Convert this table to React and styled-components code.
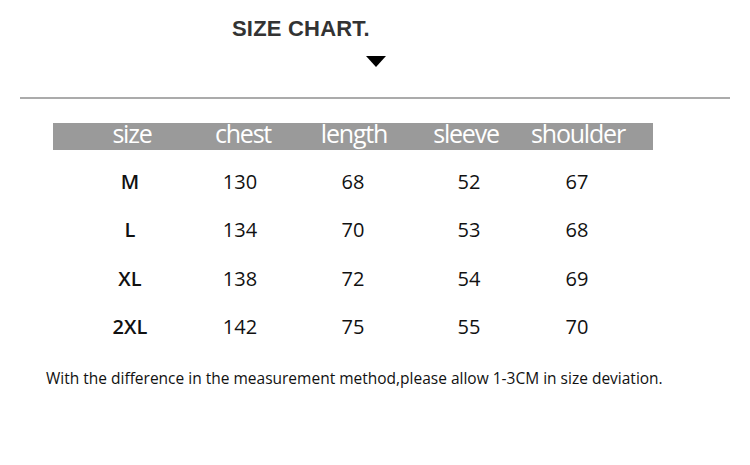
import React from "react";
import styled, { createGlobalStyle } from "styled-components";

const Global = createGlobalStyle`
  html, body { margin: 0; padding: 0; background: #fff; }
  body { width: 750px; height: 465px; overflow: hidden; }
`;

const Page = styled.div`
  width: 750px;
  height: 465px;
  background: #fff;
  display: flex;
  flex-direction: column;
  font-family: "Open Sans", "Noto Sans", sans-serif;
  color: #111;
`;

const Title = styled.h1`
  margin: 0;
  padding: 17px 0 0 232px;
  font-family: "Liberation Sans", Arial, sans-serif;
  font-weight: 700;
  font-size: 22px;
  line-height: 24px;
  color: #333;
  letter-spacing: 0.2px;
`;

const Arrow = styled.div`
  margin: 15px 0 0 366px;
  width: 0;
  height: 0;
  border-left: 10px solid transparent;
  border-right: 10px solid transparent;
  border-top: 11px solid #000;
`;

const Rule = styled.hr`
  margin: 30px 0 0 20px;
  width: 710px;
  height: 2px;
  border: 0;
  background: #ababab;
`;

const Table = styled.div`
  margin: 24px 0 0 53px;
  width: 600px;
  display: flex;
  flex-direction: column;
`;

const HeadBar = styled.div`
  display: grid;
  grid-template-columns: 112px 110px 112px 112px 112px;
  padding: 0 0 6px 23px;
  height: 21px;
  background: #9a9a9a;
`;

const HeadCell = styled.div`
  text-align: center;
  color: #fff;
  font-size: 25px;
  font-weight: 400;
  line-height: 21px;
  letter-spacing: -1.2px;
  white-space: nowrap;
`;

const Body = styled.div`
  padding-top: 8px;
  display: flex;
  flex-direction: column;
`;

const Row = styled.div`
  display: grid;
  grid-template-columns: 110px 110px 116px 116px 100px;
  padding-left: 22px;
  height: 48.3px;
  line-height: 48px;
`;

const Cell = styled.div`
  text-align: center;
  font-size: 20px;
  font-weight: ${(p) => (p.$bold ? 600 : 400)};
  color: #111;
`;

const Note = styled.p`
  margin: 17px 0 0 46px;
  font-size: 15.5px;
  line-height: 20px;
  color: #111;
  letter-spacing: 0;
  white-space: nowrap;
`;

const headers = ["size", "chest", "length", "sleeve", "shoulder"];
const rows = [
  ["M", 130, 68, 52, 67],
  ["L", 134, 70, 53, 68],
  ["XL", 138, 72, 54, 69],
  ["2XL", 142, 75, 55, 70],
];

export default function App() {
  return (
    <Page>
      <Global />
      <Title>SIZE CHART.</Title>
      <Arrow />
      <Rule />
      <Table>
        <HeadBar>
          {headers.map((h) => (
            <HeadCell key={h}>{h}</HeadCell>
          ))}
        </HeadBar>
        <Body>
          {rows.map((r) => (
            <Row key={r[0]}>
              {r.map((v, i) => (
                <Cell key={i} $bold={i === 0}>
                  {v}
                </Cell>
              ))}
            </Row>
          ))}
        </Body>
      </Table>
      <Note>
        With the difference in the measurement method,please allow 1-3CM in size deviation.
      </Note>
    </Page>
  );
}
